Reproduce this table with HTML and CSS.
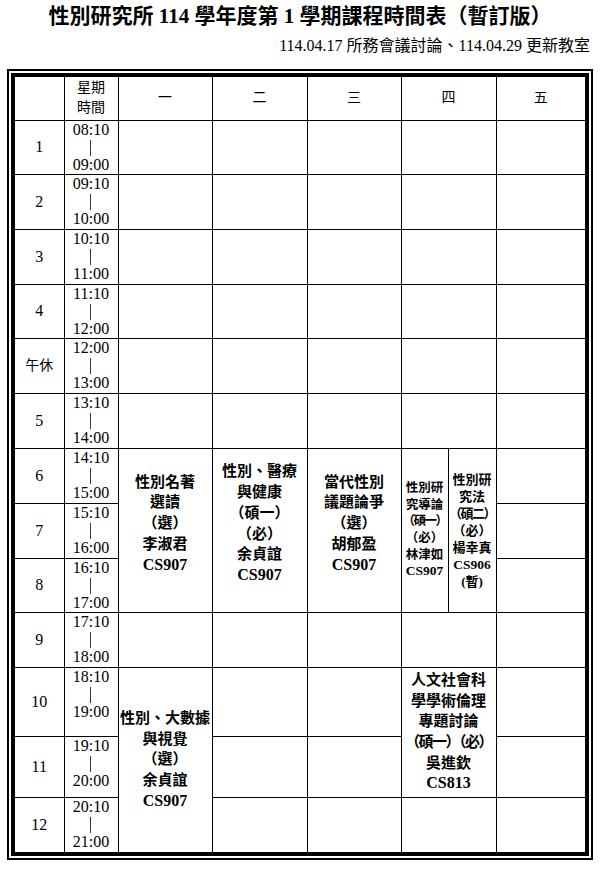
FILE: index.html
```html
<!DOCTYPE html>
<html lang="zh-Hant">
<head>
<meta charset="utf-8">
<title>性別研究所 114 學年度第 1 學期課程時間表</title>
<link rel="stylesheet" href="styles.css">
</head>
<body>
<div class="page">
  <h1 class="title">性別研究所 114 學年度第 1 學期課程時間表（暫訂版）</h1>
  <p class="subtitle">114.04.17 所務會議討論、114.04.29 更新教室</p>
  <div class="frame">
    <div class="frame-inner">
      <table class="schedule">
        <colgroup>
          <col class="c-p"><col class="c-t"><col class="c-d"><col class="c-d2"><col class="c-d"><col class="c-4a"><col class="c-4b"><col class="c-5">
        </colgroup>
        <tr class="r-head">
          <th></th>
          <th class="head-time">星期<br>時間</th>
          <th>一</th>
          <th>二</th>
          <th>三</th>
          <th colspan="2">四</th>
          <th>五</th>
        </tr>
        <tr class="h54">
          <td class="num">1</td>
          <td class="time">08:10<br><span class="bar">|</span><br>09:00</td>
          <td></td><td></td><td></td><td colspan="2"></td><td></td>
        </tr>
        <tr class="h55">
          <td class="num">2</td>
          <td class="time">09:10<br><span class="bar">|</span><br>10:00</td>
          <td></td><td></td><td></td><td colspan="2"></td><td></td>
        </tr>
        <tr class="h55">
          <td class="num">3</td>
          <td class="time">10:10<br><span class="bar">|</span><br>11:00</td>
          <td></td><td></td><td></td><td colspan="2"></td><td></td>
        </tr>
        <tr class="h54">
          <td class="num">4</td>
          <td class="time">11:10<br><span class="bar">|</span><br>12:00</td>
          <td></td><td></td><td></td><td colspan="2"></td><td></td>
        </tr>
        <tr class="h55">
          <td class="num cjk">午休</td>
          <td class="time">12:00<br><span class="bar">|</span><br>13:00</td>
          <td></td><td></td><td></td><td colspan="2"></td><td></td>
        </tr>
        <tr class="h55">
          <td class="num">5</td>
          <td class="time">13:10<br><span class="bar">|</span><br>14:00</td>
          <td></td><td></td><td></td><td colspan="2"></td><td></td>
        </tr>
        <tr class="h55">
          <td class="num">6</td>
          <td class="time">14:10<br><span class="bar">|</span><br>15:00</td>
          <td class="course up" rowspan="3">性別名著<br>選讀<br>（選）<br>李淑君<br><span class="room">CS907</span></td>
          <td class="course up" rowspan="3">性別、醫療<br>與健康<br>（碩一）<br>（必）<br>余貞誼<br><span class="room">CS907</span></td>
          <td class="course up" rowspan="3">當代性別<br>議題論爭<br>（選）<br>胡郁盈<br><span class="room">CS907</span></td>
          <td class="course small-a" rowspan="3">性別研<br>究導論<br><span class="tight">（碩一）</span><br>（必）<br>林津如<br><span class="room">CS907</span></td>
          <td class="course small-b" rowspan="3">性別研<br>究法<br><span class="tight">（碩二）</span><br>（必）<br>楊幸真<br><span class="room">CS906</span><br>(暫)</td>
          <td></td>
        </tr>
        <tr class="h55">
          <td class="num">7</td>
          <td class="time">15:10<br><span class="bar">|</span><br>16:00</td>
          <td></td>
        </tr>
        <tr class="h54">
          <td class="num">8</td>
          <td class="time">16:10<br><span class="bar">|</span><br>17:00</td>
          <td></td>
        </tr>
        <tr class="h55">
          <td class="num">9</td>
          <td class="time">17:10<br><span class="bar">|</span><br>18:00</td>
          <td></td><td></td><td></td><td colspan="2"></td><td></td>
        </tr>
        <tr class="h69">
          <td class="num">10</td>
          <td class="time">18:10<br><span class="bar">|</span><br>19:00</td>
          <td class="course" rowspan="3"><span class="nowrap">性別、大數據</span><br>與視覺<br>（選）<br>余貞誼<br><span class="room">CS907</span></td>
          <td></td><td></td>
          <td class="course" colspan="2" rowspan="2">人文社會科<br>學學術倫理<br>專題討論<br><span class="nowrap tighter">（碩一）（必）</span><br>吳進欽<br><span class="room">CS813</span></td>
          <td></td>
        </tr>
        <tr class="h61">
          <td class="num">11</td>
          <td class="time">19:10<br><span class="bar">|</span><br>20:00</td>
          <td></td><td></td><td></td>
        </tr>
        <tr class="h55">
          <td class="num">12</td>
          <td class="time">20:10<br><span class="bar">|</span><br>21:00</td>
          <td></td><td></td><td colspan="2"></td><td></td>
        </tr>
      </table>
    </div>
  </div>
</div>
</body>
</html>
```
FILE: styles.css
```css
html, body {
  margin: 0;
  padding: 0;
  background: #fff;
  color: #000;
}

.page {
  width: 586px;
  padding: 0 10px 0 7px;
  font-family: "Liberation Serif", "Noto Sans CJK TC", serif;
}

.title {
  margin: 0;
  padding-top: 2px;
  font-size: 21px;
  line-height: 28px;
  font-weight: bold;
  text-align: center;
  white-space: nowrap;
}

.subtitle {
  margin: 6px 3px 0 0;
  font-size: 16px;
  line-height: 20px;
  text-align: right;
  white-space: nowrap;
}

.frame {
  margin-top: 13px;
  border: 2px solid #000;
  padding: 2px;
}

.frame-inner {
  border: 4px solid #000;
}

.schedule {
  width: 570px;
  table-layout: fixed;
  border-collapse: collapse;
  border-style: hidden;
}

.c-p { width: 49px; }
.c-t { width: 54px; }
.c-d { width: 94px; }
.c-d2 { width: 95px; }
.c-4a { width: 47px; }
.c-4b { width: 48px; }
.c-5 { width: 89px; }

.schedule th,
.schedule td {
  border: 1px solid #000;
  padding: 0;
  text-align: center;
  vertical-align: middle;
  overflow: visible;
}

.schedule th {
  font-weight: normal;
  font-size: 14px;
  line-height: 20px;
}

.r-head { height: 43px; }
.h54 { height: 54px; }
.h55 { height: 55px; }
.h61 { height: 61px; }
.h69 { height: 69px; }

.head-time {
  font-size: 14px;
}

.num {
  font-size: 16px;
  line-height: 18px;
}

.num.cjk {
  font-size: 14px;
}

.time {
  font-size: 16px;
  line-height: 17.6px;
  vertical-align: top !important;
}

.bar {
  display: inline-block;
  will-change: transform;
  color: #000;
}

.course {
  font-weight: bold;
  font-size: 15px;
  line-height: 20.7px;
}

.course.up {
  padding-bottom: 13px !important;
}

.room {
  font-size: 16px;
}

.small-a {
  font-size: 12.5px;
  line-height: 16.6px;
  white-space: nowrap;
}

.small-b {
  font-size: 13px;
  line-height: 17px;
  white-space: nowrap;
}

.small-a .room,
.small-b .room {
  font-size: 13.5px;
}

.tight {
  letter-spacing: -1.5px;
}

.nowrap {
  white-space: nowrap;
}

.tighter {
  letter-spacing: -1.5px;
}
```
